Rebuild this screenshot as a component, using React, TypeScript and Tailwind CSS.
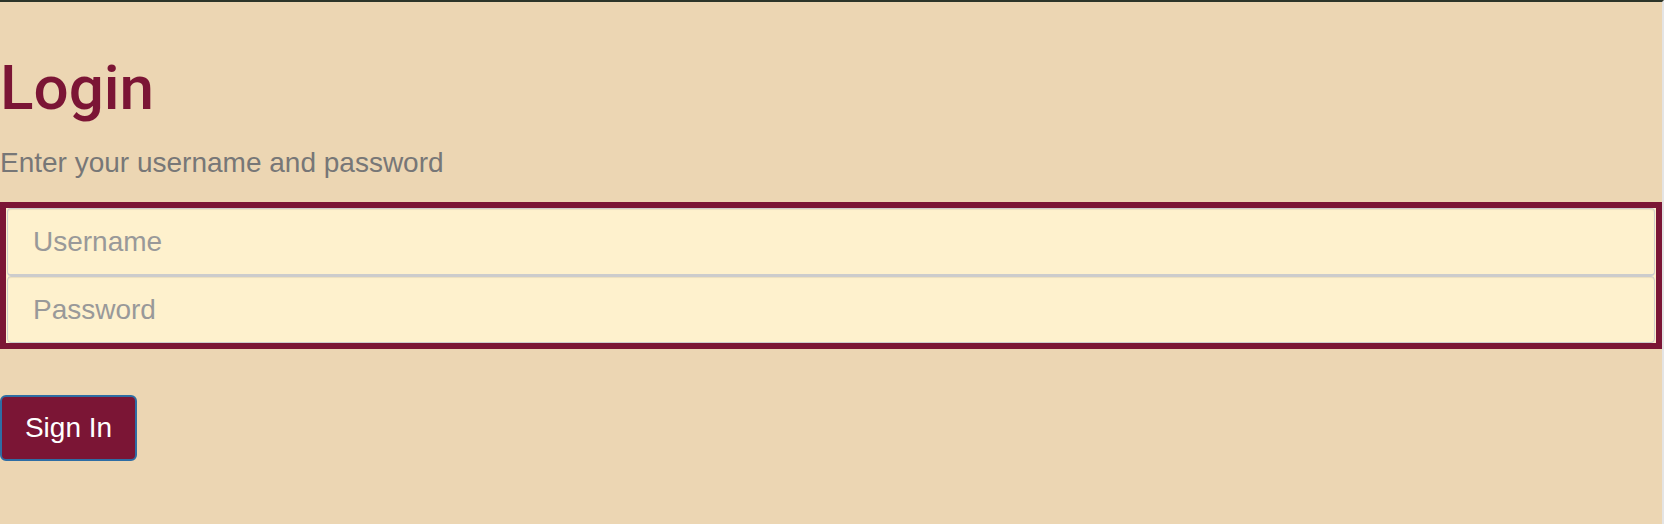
import React from "react";

export default function App() {
  return (
    <div
      className="min-h-[524px] w-full bg-[#ecd6b3] border-t-2 border-t-[#2c3529] border-r-2 border-r-[#e4e4e4]"
      style={{ fontFamily: '"Liberation Sans", Arial, sans-serif' }}
    >
      <div className="pt-[53px]">
        <h1
          className="m-0 text-[62px] leading-[66px] font-medium text-[#7b1535]"
          style={{ fontFamily: 'Roboto, "Liberation Sans", Arial, sans-serif' }}
        >
          Login
        </h1>
        <p className="mt-[22px] text-[28px] leading-[39px] text-[#777777]">
          Enter your username and password
        </p>
        <form className="mt-[20px]" onSubmit={(e) => e.preventDefault()}>
          <div className="flex flex-col border-[6px] border-[#7b1535] bg-[#fdf0cc] px-px">
            <input
              type="text"
              placeholder="Username"
              className="h-[68px] w-full rounded-[4px] border border-b-2 border-[#cccccc] bg-[#fef1cd] pl-[25px] text-[28px] text-[#555] placeholder:text-[#999999] outline-none shadow-[inset_0_1px_1px_rgba(0,0,0,0.075)]"
            />
            <input
              type="password"
              placeholder="Password"
              className="h-[67px] w-full rounded-[4px] border border-[#cccccc] bg-[#fef1cd] pl-[25px] text-[28px] text-[#555] placeholder:text-[#999999] outline-none shadow-[inset_0_1px_1px_rgba(0,0,0,0.075)]"
            />
          </div>
          <button
            type="submit"
            className="mt-[46px] h-[66px] w-[137px] rounded-[6px] border-2 border-[#2e6da4] bg-[#7b1535] text-[28px] text-white"
          >
            Sign In
          </button>
        </form>
      </div>
    </div>
  );
}
